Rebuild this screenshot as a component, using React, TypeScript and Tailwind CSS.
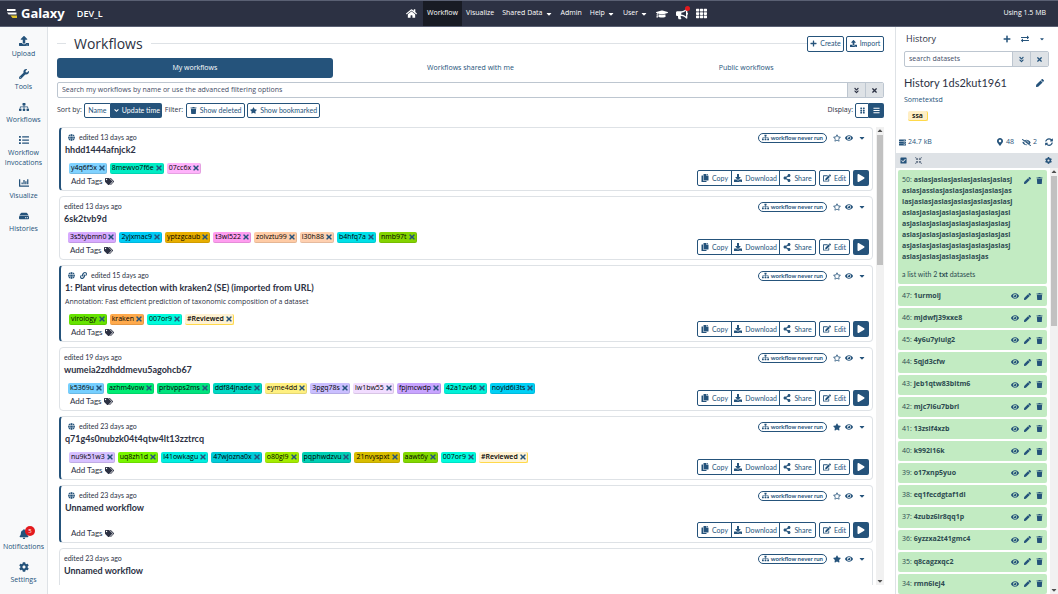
import React from "react";
import {
  FaAngleDoubleDown, FaAngleDown, FaBars, FaBell, FaBullhorn, FaCaretDown, FaChartBar, FaCheckSquare, FaCog, FaCompressArrowsAlt,
  FaCopy, FaDownload, FaEdit, FaExchangeAlt, FaEye, FaEyeSlash, FaGlobe, FaGraduationCap, FaGripVertical, FaHdd, FaHome,
  FaLink, FaList, FaMapMarkerAlt, FaPen, FaPlay, FaPlus, FaRegStar, FaServer, FaShareAlt, FaSitemap, FaStar, FaSyncAlt,
  FaTags, FaTh, FaTimes, FaTrash, FaUpload, FaWrench,
} from "react-icons/fa";

type Tag = [string, string, string?];
type Workflow = {
  title: string; days: number; pub?: boolean; linked?: boolean; star?: boolean; note?: string; tags: Tag[];
};

const workflows: Workflow[] = [
  { title: "hhdd1444afnjck2", days: 13, pub: true, tags: [["y4q6f5x", "bg-[#80d2ff]"], ["8mewvo7f6e", "bg-[#00ecc4]"], ["07cc6x", "bg-[#ffb3fb]"]] },
  { title: "6sk2tvb9d", days: 13, tags: [["3s5tybmn0", "bg-[#d7aaff]"], ["2yjxmac9", "bg-[#00cbf5]"], ["yptzgcaub", "bg-[#e8ae00]"], ["t3wl522", "bg-[#ff9df0]"], ["zolvztu99", "bg-[#ffcba5]"], ["l30h88", "bg-[#ffd0b0]"], ["b4hfq7a", "bg-[#00e0e8]"], ["nmb97t", "bg-[#84d300]"]] },
  { title: "1: Plant virus detection with kraken2 (SE) (imported from URL)", days: 15, pub: true, linked: true, note: "Annotation: Fast efficient prediction of taxonomic composition of a dataset", tags: [["virology", "bg-[#66e300]"], ["kraken", "bg-[#ffaa4c]"], ["007or9", "bg-[#00fbdc]"], ["#Reviewed", "bg-[#fff2d2]", "b"]] },
  { title: "wumeia2zdhddmevu5agohcb67", days: 19, tags: [["k5369u", "bg-[#75cfff]"], ["azhm4vow", "bg-[#00ec74]"], ["prbvpps2ms", "bg-[#00e37e]"], ["ddf84jnade", "bg-[#00d8c4]"], ["eyme4dd", "bg-[#fff080]"], ["3pgq78s", "bg-[#cabfff]"], ["lw1bw55", "bg-[#f1dcff]"], ["fpjmcwdp", "bg-[#c8a4ff]"], ["42a1zv46", "bg-[#00f0d8]"], ["noyid6i3ts", "bg-[#00d0f5]"]] },
  { title: "q71g4s0nubzk04t4qtw4lt13zztrcq", days: 23, pub: true, star: true, tags: [["nu9k51w3", "bg-[#d6c0ff]"], ["uq8zh1d", "bg-[#78f500]"], ["l41owkagu", "bg-[#00eee0]"], ["47wjozna0x", "bg-[#00ccd8]"], ["o80gl9", "bg-[#a4ec00]"], ["pqphwdzvu", "bg-[#00cfb4]"], ["21nvyspxt", "bg-[#d9bd00]"], ["aawt6y", "bg-[#82d800]"], ["007or9", "bg-[#00fbdc]"], ["#Reviewed", "bg-[#fff2d2]", "b"]] },
  { title: "Unnamed workflow", days: 23, pub: true, tags: [] },
  { title: "Unnamed workflow", days: 23, star: true, tags: [] },
];

const datasets: [number, string][] = [
  [47, "1urmoij"], [46, "mjdwfj39xxe8"], [45, "4y6u7yiulg2"], [44, "5qjd3cfw"], [43, "jeb1qtw83bitm6"], [42, "mjc7l6u7bbri"],
  [41, "13zslf4xzb"], [40, "k992i16k"], [39, "o17xnp5yuo"], [38, "eq1fecdgtaf1di"], [37, "4zubz6lr8qq1p"], [36, "6yzzxa2t41gmc4"],
  [35, "q8cagzxqc2"], [34, "rmn6iej4"],
];

const collectionName = [
  "aslasjaslasjaslasjaslasjaslasj", "aslasjasslasjaslasjaslasjaslasjas", "lasjaslasjaslasjaslasjaslasjaslasj",
  "aslasjaslasjaslasjaslasjaslasjasl", "asjaslasjaslasjaslasjaslasjaslasj", "aslasjaslasjaslasjaslasjaslasjasl",
  "asjaslasjaslasjaslasjaslasjaslasj", "aslasjaslasjaslasjaslasjas",
];

const outline = "flex items-center justify-center gap-[3px] border border-[#25537b] bg-white font-[Lato,sans-serif] whitespace-nowrap text-[#25537b]";

function SideItem({ icon, label, badge }: { icon: React.ReactNode; label: string; badge?: string }) {
  return (
    <a href="#" className="relative flex w-full flex-col items-center gap-[2px] text-center text-[7px] leading-[10px] text-[#25537b]">
      <span className="flex h-3 items-center text-[10px]">{icon}</span>
      <span>{label}</span>
      {badge && <span className="absolute -top-[2px] left-[25px] flex size-[10px] items-center justify-center rounded-full bg-[#e31a1e] text-[6px] text-white">{badge}</span>}
    </a>
  );
}

function WorkflowCard({ w }: { w: Workflow }) {
  return (
    <article className={`flex shrink-0 flex-col rounded border border-[#dee2e6] pr-[3px] pl-1 ${w.pub ? "border-l-2 border-l-[#25537b]" : ""}`}>
      <div className="flex h-[17px] items-center pt-[2px] font-[Lato,sans-serif] text-[7px]">
        {w.pub && <FaGlobe className="mr-1 ml-[3px] text-[#25537b]" />}
        {w.linked && <FaLink className="mr-1 ml-[1px] text-[#25537b]" />}
        <span className="grow">edited {w.days} days ago</span>
        <span className="mr-1 flex h-[10px] items-center gap-[2px] rounded-full border border-[#25537b] px-[3px] text-[6px] font-bold text-[#25537b]"><FaSitemap className="text-[7px]" />workflow never run</span>
        <button aria-label="Bookmark" className="px-[2px] text-[8px] text-[#25537b]">{w.star ? <FaStar /> : <FaRegStar />}</button>
        <button aria-label="Preview" className="px-[2px] text-[8px] text-[#25537b]"><FaEye /></button>
        <button aria-label="More" className="px-[3px] text-[8px] text-[#25537b]"><FaCaretDown /></button>
      </div>
      <h2 className="font-[Lato,sans-serif] text-[9px] leading-[10px] font-bold">{w.title}</h2>
      {w.note && <p className="mt-1 text-[7px] leading-[9px]">{w.note}</p>}
      <div className="flex items-end justify-between pt-2 pb-1">
        <div className="pl-1">
          <div className="flex min-h-[5px] gap-[3px]">
            {w.tags.map(([name, color, bold]) => (
              <span key={name} className={`flex h-[11px] items-center rounded-[2px] border-r border-b pl-[2px] text-[7px] text-black ${bold ? "border-[#ffd94a] font-semibold" : "border-black/10"} ${color}`}>
                {name}
                <button aria-label={`Remove ${name}`} className="pl-px text-[8px] text-[#25537b]"><FaTimes /></button>
              </span>
            ))}
          </div>
          <button className="mt-[2px] flex h-[10px] items-center gap-[2px] pl-[2px] font-[Lato,sans-serif] text-[8px]">Add Tags <FaTags className="text-[9px]" /></button>
        </div>
        <div className="flex h-4 gap-[3px] text-[7px]">
          <div className="flex">
            <button className={`${outline} w-[35px] rounded-l-[2px]`}><FaCopy className="text-[8px]" />Copy</button>
            <button className={`${outline} -ml-px w-[49px]`}><FaDownload className="text-[8px]" />Download</button>
            <button className={`${outline} -ml-px w-[37px] rounded-r-[2px]`}><FaShareAlt className="text-[8px]" />Share</button>
          </div>
          <button className={`${outline} w-[31px] rounded-[2px]`}><FaEdit className="text-[8px]" />Edit</button>
          <button aria-label="Run" className="flex w-4 items-center justify-center rounded-[2px] bg-[#25537b] text-[8px] text-white"><FaPlay /></button>
        </div>
      </div>
    </article>
  );
}

function Scrollbar({ thumb }: { thumb: string }) {
  return (
    <div aria-hidden="true" className="flex w-2 shrink-0 flex-col items-center bg-[#f1f1f1] text-[6px] text-[#505050]">
      <FaCaretDown className="h-2 shrink-0 rotate-180" />
      <div className={`w-[6px] shrink-0 bg-[#c1c1c1] ${thumb}`} />
      <div className="grow" />
      <FaCaretDown className="h-2 shrink-0" />
    </div>
  );
}

function SearchBar({ placeholder }: { placeholder: string }) {
  return (
    <div className="flex h-4 shrink-0 overflow-hidden rounded-[2px] border border-[#bdc6d0]">
      <input aria-label={placeholder} placeholder={placeholder} className="min-w-0 grow px-1 text-[7px] outline-none placeholder:text-[#444c66]" />
      <button aria-label="Advanced search" className="flex w-[18px] items-center justify-center border-l border-[#bdc6d0] bg-[#dee2e6] text-[7px]"><FaAngleDoubleDown /></button>
      <button aria-label="Clear search" className="flex w-[18px] items-center justify-center border-l border-[#bdc6d0] bg-[#dee2e6] text-[7px]"><FaTimes /></button>
    </div>
  );
}

export default function App() {
  const nav = "flex h-full items-center gap-[2px] px-[4px]";
  return (
    <div className="flex h-screen flex-col overflow-hidden bg-white font-['Open_Sans','Noto_Sans',sans-serif] text-[7px] text-[#2c3143]">
      <header className="flex h-[27px] shrink-0 items-center border-y border-[#5a6073] bg-[#2c3143] text-white">
        <div className="flex w-[38%] items-center pl-[7px]">
          <svg viewBox="0 0 20 18" className="mr-1 h-[9px] w-[10px]"><path d="M0 0h17v4H0zM0 7h19v4H3z" fill="#fff" /><path d="M7 13h13v5h-9z" fill="#dfc22b" /></svg>
          <span className="font-['Noto_Sans',sans-serif] text-[13px] font-bold">Galaxy</span>
          <span className="ml-3 text-[9px] font-semibold">DEV_L</span>
        </div>
        <nav className="flex h-full items-center text-[7px]">
          <a href="#" aria-label="Home" className={`${nav} pr-[6px] text-[11px]`}><FaHome /></a>
          <a href="#" className={`${nav} bg-[#181b24]`}>Workflow</a>
          <a href="#" className={nav}>Visualize</a>
          <a href="#" className={nav}>Shared Data<FaCaretDown className="text-[8px]" /></a>
          <a href="#" className={nav}>Admin</a>
          <a href="#" className={nav}>Help<FaCaretDown className="text-[8px]" /></a>
          <a href="#" className={nav}>User<FaCaretDown className="text-[8px]" /></a>
          <a href="#" aria-label="Training" className={`${nav} text-[12px]`}><FaGraduationCap /></a>
          <a href="#" aria-label="News" className={`${nav} relative text-[12px]`}><FaBullhorn /><span className="absolute top-[5px] right-[2px] size-[5px] rounded-full bg-[#e31a1e]" /></a>
          <a href="#" aria-label="Apps" className={`${nav} text-[11px]`}><FaTh /></a>
        </nav>
        <span className="flex-1 pr-3 text-right">Using 1.5 MB</span>
      </header>
      <div className="flex min-h-0 grow">
        <aside className="flex w-12 shrink-0 flex-col items-center gap-[9px] border-r border-[#dee2e6] bg-[#f8f9fa] pt-2 pb-[9px]">
          <SideItem icon={<FaUpload />} label="Upload" />
          <SideItem icon={<FaWrench />} label="Tools" />
          <SideItem icon={<FaSitemap />} label="Workflows" />
          <SideItem icon={<FaList />} label="Workflow Invocations" />
          <SideItem icon={<FaChartBar />} label="Visualize" />
          <SideItem icon={<FaHdd />} label="Histories" />
          <div className="grow" />
          <SideItem icon={<FaBell />} label="Notifications" badge="5" />
          <SideItem icon={<FaCog />} label="Settings" />
        </aside>
        <main className="flex min-w-0 grow flex-col px-[9px] pt-2 pr-[11px] pb-[9px]">
          <div className="flex h-[17px] shrink-0 items-center">
            <span className="h-px w-[9px] bg-[#dee2e6]" />
            <h1 className="px-2 text-[14px]">Workflows</h1>
            <span className="h-px grow bg-[#dee2e6]" />
            <button className={`${outline} h-4 w-[37px] rounded-[2px]`}><FaPlus />Create</button>
            <button className={`${outline} ml-[2px] h-4 w-[38px] rounded-[2px]`}><FaUpload />Import</button>
          </div>
          <div className="mt-[6px] grid h-5 shrink-0 grid-cols-3 text-[#25537b]">
            <button className="rounded-[3px] bg-[#25537b] text-white">My workflows</button>
            <button>Workflows shared with me</button>
            <button>Public workflows</button>
          </div>
          <div className="mt-1 flex flex-col"><SearchBar placeholder="Search my workflows by name or use the advanced filtering options" /></div>
          <div className="mt-[5px] flex h-[15px] shrink-0 items-center gap-[2px]">
            <span>Sort by:</span>
            <div className="flex h-full">
              <button className={`${outline} w-[27px] rounded-l-[2px]`}>Name</button>
              <button className="flex w-[51px] items-center justify-center gap-[2px] rounded-r-[2px] bg-[#25537b] font-[Lato,sans-serif] text-white"><FaAngleDown />Update time</button>
            </div>
            <span className="px-px">Filter:</span>
            <button className={`${outline} h-full w-[59px] rounded-[2px]`}><FaTrash />Show deleted</button>
            <button className={`${outline} h-full w-[73px] rounded-[2px]`}><FaStar />Show bookmarked</button>
            <span className="ml-auto">Display:</span>
            <div className="flex h-full">
              <button aria-label="Grid view" className={`${outline} w-[14px] rounded-l-[2px]`}><FaGripVertical /></button>
              <button aria-label="List view" className="flex w-[15px] items-center justify-center rounded-r-[2px] bg-[#25537b] text-white"><FaBars /></button>
            </div>
          </div>
          <div className="mt-[9px] flex min-h-0 grow gap-[3px]">
            <div className="flex min-w-0 grow flex-col gap-[5px] overflow-y-auto pl-[2px] [scrollbar-width:none]">
              {workflows.map((w, i) => <WorkflowCard key={i} w={w} />)}
            </div>
            <Scrollbar thumb="h-[130px]" />
          </div>
        </main>
        <aside className="flex w-[163px] shrink-0 flex-col border-l border-[#dee2e6] text-[#25537b]">
          <div className="flex flex-col px-2 pr-[9px]">
            <div className="flex h-6 items-center pr-1 pl-[2px] text-[8px]">
              <h2 className="grow text-[9px] text-[#2c3143]">History</h2>
              <button aria-label="New history"><FaPlus /></button>
              <button aria-label="Switch history" className="ml-[10px]"><FaExchangeAlt /></button>
              <button aria-label="History options" className="ml-[10px] text-[6px]"><FaCaretDown /></button>
            </div>
            <SearchBar placeholder="search datasets" />
            <div className="mt-2 flex h-4 items-center">
              <h3 className="grow font-[Lato,sans-serif] text-[11px] text-[#2c3143]">History 1ds2kut1961</h3>
              <button aria-label="Edit history" className="mr-[5px] text-[8px]"><FaPen /></button>
            </div>
            <p className="mt-1 leading-[10px]">Sometextsd</p>
            <div className="mt-[6px] flex pl-1">
              <span className="h-[10px] rounded-[2px] border-r border-b border-[#ffd94a] bg-[#ffeec4] px-1 leading-[9px] font-semibold text-black">ssa</span>
            </div>
          </div>
          <div className="mt-[15px] flex h-3 items-center px-[3px] pr-[5px]">
            <span className="flex grow items-center gap-[2px]"><FaServer />24.7 kB</span>
            <span className="flex items-center gap-[2px]"><FaMapMarkerAlt className="text-[8px]" />48</span>
            <span className="ml-2 flex items-center gap-[2px]"><FaEyeSlash className="text-[9px]" />2</span>
            <button aria-label="Refresh" className="ml-2 text-[8px]"><FaSyncAlt /></button>
          </div>
          <div className="mt-[5px] flex h-[15px] shrink-0 items-center bg-[#dee2e6] px-1 pr-[6px]">
            <button aria-label="Select datasets"><FaCheckSquare /></button>
            <button aria-label="Collapse all" className="ml-2 grow text-[#6c7a8c]"><FaCompressArrowsAlt /></button>
            <button aria-label="History settings"><FaCog /></button>
          </div>
          <div className="flex min-h-0 grow">
            <div className="flex min-w-0 grow flex-col gap-[2px] pt-[2px] pr-[3px] pl-[2px]">
              <div className="flex h-[114px] shrink-0 flex-col rounded-[2px] bg-[#c2ebc2] px-1 pt-1 text-[#2c4a50]">
                <div className="flex">
                  <p className="grow font-bold">
                    {collectionName.map((line, i) => (
                      <span key={i} className="block leading-[11px]">{i === 0 && <span className="font-normal">50: </span>}{line}</span>
                    ))}
                  </p>
                  <div className="flex h-3 items-center gap-[5px] text-[#25537b]">
                    <button aria-label="Edit 50"><FaPen /></button>
                    <button aria-label="Delete 50"><FaTrash /></button>
                  </div>
                </div>
                <p className="mt-2 font-[Lato,sans-serif] leading-[8px]">a list with 2 <b>txt</b> datasets</p>
              </div>
              {datasets.map(([id, name]) => (
                <div key={id} className="flex min-h-0 flex-1 items-center rounded-[2px] bg-[#c2ebc2] px-1 text-[#2c4a50]">
                  <span className="grow">{id}: <b>{name}</b></span>
                  <div className="flex items-center gap-[5px] text-[#25537b]">
                    <button aria-label={`View ${id}`} className="text-[8px]"><FaEye /></button>
                    <button aria-label={`Edit ${id}`}><FaPen /></button>
                    <button aria-label={`Delete ${id}`}><FaTrash /></button>
                  </div>
                </div>
              ))}
            </div>
            <Scrollbar thumb="h-[150px]" />
          </div>
        </aside>
      </div>
    </div>
  );
}
